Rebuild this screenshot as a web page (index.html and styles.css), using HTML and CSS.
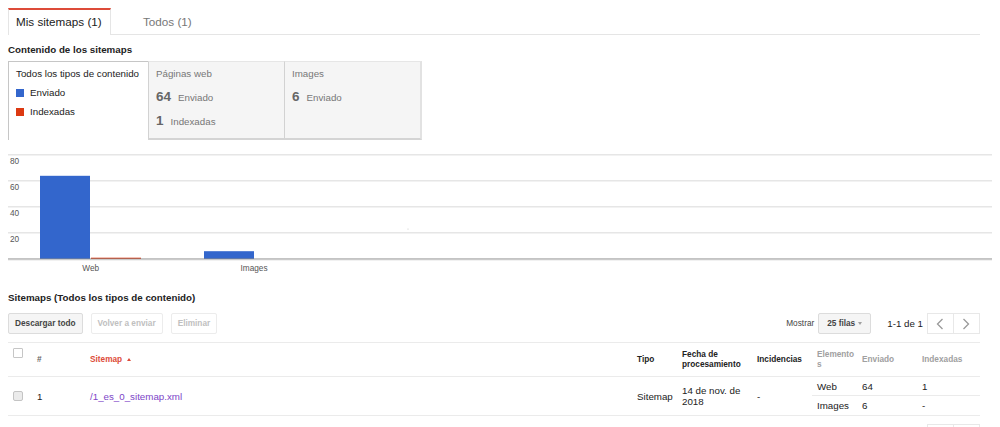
FILE: index.html
```html
<!DOCTYPE html>
<html lang="es">
<head>
<meta charset="utf-8">
<title>Sitemaps</title>
<link rel="stylesheet" href="styles.css">
</head>
<body>
<div class="page">
  <div class="tabs">
    <div class="tab tab-active">Mis sitemaps (1)</div>
    <div class="tab tab-idle">Todos (1)</div>
  </div>

  <h2 class="section-title">Contenido de los sitemaps</h2>

  <div class="cards">
    <div class="card card-all">
      <div class="card-title">Todos los tipos de contenido</div>
      <div class="legend-row legend-first"><span class="swatch swatch-blue"></span>Enviado</div>
      <div class="legend-row"><span class="swatch swatch-red"></span>Indexadas</div>
    </div>
    <div class="card card-type">
      <div class="card-title muted-title">Páginas web</div>
      <div class="stat stat-first"><span class="stat-num">64</span>Enviado</div>
      <div class="stat"><span class="stat-num">1</span>Indexadas</div>
    </div>
    <div class="card card-type card-last">
      <div class="card-title muted-title">Images</div>
      <div class="stat stat-first"><span class="stat-num">6</span>Enviado</div>
    </div>
  </div>

  <svg class="chart" width="984" height="130" viewBox="0 0 984 130">
    <g class="grid">
      <rect x="0" y="6" width="984" height="1.5" fill="#e6e6e6"/>
      <rect x="0" y="32" width="984" height="1.5" fill="#e6e6e6"/>
      <rect x="0" y="58" width="984" height="1.5" fill="#e6e6e6"/>
      <rect x="0" y="84" width="984" height="1.5" fill="#e6e6e6"/>
    </g>
    <g class="axis-labels" font-family="Liberation Sans, Arial, sans-serif" font-size="8.25" fill="#555">
      <text x="2" y="15.5">80</text>
      <text x="2" y="41.5">60</text>
      <text x="2" y="67.5">40</text>
      <text x="2" y="93.5">20</text>
    </g>
    <rect x="32" y="27.8" width="50" height="83.2" fill="#3366cc"/>
    <rect x="83" y="109.7" width="50" height="1.3" fill="#dc3912"/>
    <rect x="196" y="103.2" width="50" height="7.8" fill="#3366cc"/>
    <circle cx="400" cy="81" r="0.6" fill="#c8c8c8"/>
    <rect x="0" y="110.5" width="984" height="1" fill="#8a8a8a"/>
    <rect x="0" y="111.5" width="984" height="0.8" fill="#d0d0d0"/>
    <g font-family="Liberation Sans, Arial, sans-serif" font-size="8.25" fill="#555" text-anchor="middle">
      <text x="82.7" y="123">Web</text>
      <text x="246" y="123">Images</text>
    </g>
  </svg>

  <h2 class="section-title list-title">Sitemaps (Todos los tipos de contenido)</h2>

  <div class="toolbar">
    <button class="btn btn-primary">Descargar todo</button>
    <button class="btn btn-disabled">Volver a enviar</button>
    <button class="btn btn-disabled">Eliminar</button>
    <div class="toolbar-right">
      <span class="show-label">Mostrar</span>
      <div class="select">25 filas<span class="select-arrow"></span></div>
      <span class="range">1-1 de 1</span>
      <div class="pager">
        <span class="pager-btn"><svg width="8" height="12" viewBox="0 0 8 12"><polyline points="6.5,1 1.5,6 6.5,11" fill="none" stroke="#9a9a9a" stroke-width="1.3"/></svg></span>
        <span class="pager-btn"><svg width="8" height="12" viewBox="0 0 8 12"><polyline points="1.5,1 6.5,6 1.5,11" fill="none" stroke="#9a9a9a" stroke-width="1.3"/></svg></span>
      </div>
    </div>
  </div>

  <table class="sitemaps">
    <colgroup>
      <col class="col-cb"><col class="col-num"><col class="col-path"><col class="col-type"><col class="col-date"><col class="col-issues"><col class="col-elem"><col class="col-sent"><col class="col-idx">
    </colgroup>
    <thead>
      <tr>
        <th class="cb-head"><span class="checkbox"></span></th>
        <th class="hash">#</th>
        <th class="sorted">Sitemap<span class="sort-arrow"></span></th>
        <th>Tipo</th>
        <th>Fecha de procesamiento</th>
        <th>Incidencias</th>
        <th class="muted elem-head">Elementos</th>
        <th class="muted">Enviado</th>
        <th class="muted">Indexadas</th>
      </tr>
    </thead>
    <tbody>
      <tr class="row-main">
        <td rowspan="2" class="cb-body"><span class="checkbox checkbox-filled"></span></td>
        <td rowspan="2">1</td>
        <td rowspan="2"><a class="sitemap-link" href="#">/1_es_0_sitemap.xml</a></td>
        <td rowspan="2">Sitemap</td>
        <td rowspan="2" class="date">14 de nov. de 2018</td>
        <td rowspan="2">-</td>
        <td class="sub">Web</td>
        <td class="sub">64</td>
        <td class="sub">1</td>
      </tr>
      <tr class="row-sub">
        <td class="sub sub-last">Images</td>
        <td class="sub sub-last">6</td>
        <td class="sub sub-last">-</td>
      </tr>
    </tbody>
  </table>

  <div class="pager pager-bottom">
    <span class="pager-btn"></span>
    <span class="pager-btn"></span>
  </div>
</div>
</body>
</html>
```

FILE: styles.css
```css
* { box-sizing: border-box; }

body {
  margin: 0;
  background: #fff;
  color: #222;
  font-family: "Liberation Sans", Arial, sans-serif;
  font-size: 9.75px;
}

.page {
  width: 972px;
  margin: 0 8px;
  padding-top: 8px;
}

/* Tabs */
.tabs {
  display: flex;
  height: 27px;
  border-bottom: 1px solid #e5e5e5;
}
.tab {
  font-size: 11.7px;
  line-height: 24px;
}
.tab-active {
  width: 103px;
  height: 27px;
  margin-bottom: -1px;
  padding: 0 7px;
  background: #fff;
  color: #222;
  border-top: 2px solid #dd4b39;
  border-left: 1px solid #e5e5e5;
  border-right: 1px solid #e5e5e5;
}
.tab-idle {
  margin-left: 32px;
  padding-top: 2px;
  color: #777;
}

/* Section titles */
.section-title {
  margin: 8px 0 4px;
  font-size: 9.75px;
  font-weight: bold;
  line-height: 14px;
  color: #222;
}
.list-title {
  margin: 13px 0 8px;
}

/* Content cards */
.cards {
  display: flex;
  height: 79px;
}
.card {
  padding: 6px 7px 0;
}
.card-all {
  width: 140px;
  border-left: 1px solid #c6c6c6;
  border-top: 1px solid #c6c6c6;
}
.card-type {
  width: 136px;
  background: #f5f5f5;
  border-left: 1px solid #d2d2d2;
  border-top: 1px solid #e6e6e6;
  border-bottom: 2px solid #d4d4d4;
}
.card-last {
  width: 138px;
  border-right: 2px solid #e2e2e2;
}
.card-title {
  line-height: 12px;
  white-space: nowrap;
}
.muted-title { color: #777; }

.legend-row {
  display: flex;
  align-items: center;
  line-height: 19px;
}
.legend-first { margin-top: 3px; }
.swatch {
  width: 8px;
  height: 8px;
  margin-right: 6px;
}
.swatch-blue { background: #3366cc; }
.swatch-red { background: #dc3912; }

.stat {
  line-height: 23px;
  color: #777;
}
.stat-first { margin-top: 5px; }
.stat-num {
  margin-right: 7px;
  font-size: 13.5px;
  font-weight: bold;
  color: #666;
}

/* Chart */
.chart {
  display: block;
  margin-top: 8px;
  overflow: visible;
}

/* Toolbar */
.toolbar {
  display: flex;
  align-items: center;
  height: 21px;
}
.btn {
  height: 21px;
  margin: 0 8px 0 0;
  padding: 0 6px;
  border: 1px solid #dcdcdc;
  border-radius: 2px;
  font-family: "Liberation Sans", Arial, sans-serif;
  font-size: 8.25px;
  font-weight: bold;
  line-height: 19px;
}
.btn-primary {
  background: #f5f5f5;
  color: #444;
}
.btn-disabled {
  background: #fff;
  border-color: #ececec;
  color: #c0c0c0;
}
.toolbar-right {
  display: flex;
  align-items: center;
  margin-left: auto;
}
.show-label {
  margin-right: 4px;
  font-size: 8.25px;
  color: #444;
}
.select {
  display: flex;
  align-items: center;
  width: 53px;
  height: 21px;
  padding-left: 8px;
  background: #f5f5f5;
  border: 1px solid #dcdcdc;
  border-radius: 2px;
  font-size: 8.25px;
  font-weight: bold;
  color: #444;
}
.select-arrow {
  width: 0;
  height: 0;
  margin-left: 3px;
  border-left: 2.5px solid transparent;
  border-right: 2.5px solid transparent;
  border-top: 3px solid #a0a0a0;
}
.range {
  margin-left: 16px;
  color: #222;
}
.pager {
  display: flex;
  margin-left: 4px;
}
.pager-btn {
  display: flex;
  align-items: center;
  justify-content: center;
  width: 26.5px;
  height: 21px;
  background: #fff;
  border: 1px solid #e8e8e8;
}
.pager-btn + .pager-btn { border-left: none; }
.pager-bottom {
  justify-content: flex-end;
  margin-top: 8px;
}

/* Table */
.sitemaps {
  width: 972px;
  margin-top: 8px;
  border-collapse: separate;
  border-spacing: 0;
  table-layout: fixed;
}
.col-cb { width: 24px; }
.col-num { width: 53px; }
.col-path { width: 547px; }
.col-type { width: 45px; }
.col-date { width: 75px; }
.col-issues { width: 60px; }
.col-elem { width: 45px; }
.col-sent { width: 60px; }
.col-idx { width: 63px; }

.sitemaps th {
  height: 35px;
  padding: 0 5px;
  border-top: 1px solid #ebebeb;
  border-bottom: 1px solid #ebebeb;
  font-size: 8.25px;
  font-weight: bold;
  line-height: 9.5px;
  text-align: left;
  vertical-align: middle;
  color: #222;
}
.sitemaps th.cb-head {
  vertical-align: top;
  padding-top: 5px;
}
.sitemaps th.hash { color: #666; }
.sitemaps th.sorted { color: #dd4b39; }
.sitemaps th.muted { color: #a0a0a0; }
.sitemaps th.elem-head {
  padding-right: 0;
  word-break: break-all;
}
.sort-arrow {
  display: inline-block;
  width: 0;
  height: 0;
  margin-left: 5px;
  vertical-align: 1px;
  border-left: 2.5px solid transparent;
  border-right: 2.5px solid transparent;
  border-bottom: 3px solid #dd4b39;
}

.sitemaps td {
  padding: 0 5px;
  font-size: 9.75px;
  line-height: 11px;
  vertical-align: middle;
  color: #222;
}
.sitemaps td[rowspan] {
  border-bottom: 1px solid #ebebeb;
}
.sitemaps td.sub {
  height: 18px;
}
.sitemaps td.sub-last {
  height: 21px;
  border-top: 1px solid #ebebeb;
  border-bottom: 1px solid #ebebeb;
}

.checkbox {
  display: block;
  width: 10px;
  height: 10px;
  background: #fff;
  border: 1px solid #c6c6c6;
  border-radius: 1px;
}
.checkbox-filled {
  background: #ebebeb;
  border-color: #c4c4c4;
  border-radius: 2px;
}

.sitemap-link {
  color: #7d45c8;
  text-decoration: none;
}
```
